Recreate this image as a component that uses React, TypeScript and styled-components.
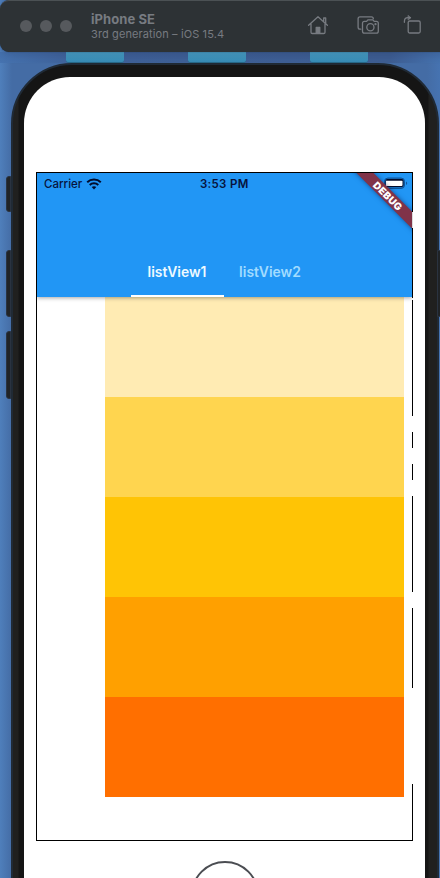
import React from "react";
import styled, { createGlobalStyle } from "styled-components";

const GlobalStyle = createGlobalStyle`
  * { box-sizing: border-box; }
  body { margin: 0; }
`;

const Desktop = styled.div`
  position: relative;
  width: 440px;
  height: 878px;
  overflow: hidden;
  display: flex;
  flex-direction: column;
  background: linear-gradient(90deg, #4f7fbb 0, #446ca5 12px, #446ca5 427px, #4673b1 440px);
  font-family: Inter, "Liberation Sans", sans-serif;
`;

const TitleBar = styled.header`
  position: relative;
  z-index: 1;
  flex: none;
  width: 460px;
  height: 52px;
  padding: 0 0 0 20px;
  display: flex;
  align-items: center;
  background: #2d3235;
  border-top: 1px solid #4b5154;
  border-radius: 9px;
  box-shadow: 0 0 1px #1c2a3c, 0 3px 10px rgba(20, 30, 60, 0.2);
`;

const Lights = styled.div`
  display: flex;
  gap: 8px;
  width: 71px;
  padding-bottom: 1px;
`;

const Light = styled.span`
  width: 12px;
  height: 12px;
  border-radius: 50%;
  background: #56595d;
`;

const Device = styled.div`
  width: 216px;
  color: #777b81;
`;

const DeviceName = styled.div`
  font-size: 13px;
  font-weight: 700;
  line-height: 15px;
  letter-spacing: 0.07px;
`;

const DeviceOs = styled.div`
  font-size: 11px;
  line-height: 14px;
  letter-spacing: 0.11px;
  white-space: nowrap;
`;

const Tools = styled.div`
  display: flex;
  padding-bottom: 3px;
  color: #777b81;
`;

const Tool = styled.span<{ $width: number }>`
  display: flex;
  width: ${(p) => p.$width}px;
`;

const Dock = styled.div`
  flex: none;
  height: 11px;
  padding-left: 66px;
  display: flex;
  gap: 64px;
  background: linear-gradient(90deg, #4673b0 0, #3f6199 80px, #3e5e93 390px, #4673b0 440px);
`;

const Folder = styled.span`
  flex: none;
  width: 58px;
  height: 11px;
  border-radius: 0 0 3px 3px;
  background: linear-gradient(#4aa2c8, #378cb6);
  border-bottom: 1px solid #286989;
`;

const Phone = styled.main`
  flex: none;
  width: 428px;
  height: 900px;
  margin: 0 0 0 11px;
  padding: 12px 10px 0 11px;
  border: 2px solid #202a35;
  border-radius: 61px;
  background: linear-gradient(90deg, #20201f 0, #20201f 5px, #151515 6px, #151515 415px, #20201f 416px);
`;

const Face = styled.div`
  width: 401px;
  height: 880px;
  padding: 95px 12px 0;
  display: flex;
  flex-direction: column;
  align-items: center;
  background: #fff;
  border-radius: 46px;
`;

const Display = styled.section`
  position: relative;
  flex: none;
  width: 377px;
  height: 669px;
  overflow: hidden;
  display: flex;
  flex-direction: column;
  border: solid #000;
  border-width: 1px 0 1px 1px;
`;

const AppBar = styled.div`
  flex: none;
  width: 375px;
  height: 124px;
  display: flex;
  flex-direction: column;
  justify-content: space-between;
  background: #2196f5;
  box-shadow: 0 1px 4px rgba(0, 0, 0, 0.35);
  position: relative;
`;

const StatusBar = styled.div`
  height: 21px;
  padding: 0 4px 0 7px;
  display: flex;
  align-items: center;
  font-size: 11.5px;
  font-weight: 500;
  color: #07133d;
`;

const Carrier = styled.div`
  width: 156px;
  display: flex;
  align-items: center;
  gap: 4px;
`;

const Clock = styled.div`
  flex: 1;
  font-weight: 600;
  letter-spacing: 0.3px;
`;

const Battery = styled.div`
  display: flex;
  justify-content: flex-end;
`;

const Tabs = styled.nav`
  display: flex;
  height: 48px;
  padding-left: 94px;
`;

const Tab = styled.div<{ $active?: boolean }>`
  width: 93px;
  height: 48px;
  padding: 14px 1px 0 0;
  text-align: center;
  font-size: 13.9px;
  line-height: 19px;
  font-weight: 600;
  color: ${(p) => (p.$active ? "#eefaff" : "#a2dcff")};
  border-bottom: 2px solid ${(p) => (p.$active ? "#fff" : "transparent")};
`;

const DebugCorner = styled.div`
  position: absolute;
  top: 0;
  right: 1px;
  width: 66px;
  height: 66px;
  overflow: hidden;
`;

const DebugRibbon = styled.div`
  position: absolute;
  top: 17px;
  left: -8px;
  width: 100px;
  height: 12px;
  transform: rotate(45deg);
  background: #803349;
  box-shadow: 0 0 5px rgba(0, 20, 70, 0.55);
  color: #fff;
  text-align: center;
  font-size: 10px;
  line-height: 12px;
  font-weight: 900;
  letter-spacing: 0.3px;
`;

const List = styled.div`
  width: 299.5px;
  margin-left: 67.5px;
  display: flex;
  flex-direction: column;
`;

const Swatch = styled.div<{ $color: string }>`
  height: 100px;
  background: ${(p) => p.$color};
`;

const EdgeLine = styled.svg`
  position: absolute;
  top: 0;
  right: 0;
`;

const HomeButton = styled.div`
  flex: none;
  width: 68px;
  height: 68px;
  margin-top: 20px;
  border: 2px solid #4b4d52;
  border-radius: 50%;
`;

const SideButton = styled.span<{ $top: number; $height: number; $right?: boolean }>`
  position: absolute;
  top: ${(p) => p.$top}px;
  ${(p) => (p.$right ? "right: -2px;" : "left: 6px;")}
  width: 5px;
  height: ${(p) => p.$height}px;
  background: #202326;
  border: 1px solid #2a3340;
  border-radius: ${(p) => (p.$right ? "0 3px 3px 0" : "3px 0 0 3px")};
`;

const HomeIcon = () => (
  <svg width="22" height="22" viewBox="0 0 22 22" fill="none" stroke="currentColor" strokeWidth="1.3" strokeLinejoin="round" strokeLinecap="round">
    <path d="M1.6 11.2 11 2.8l9.4 8.4M16.7 7.6V4h2v5.2M4 9.8v8.4c0 .9.5 1.3 1.3 1.3h11.4c.8 0 1.3-.4 1.3-1.3V9.8" />
    <path d="M9.2 19v-5.6h3.6V19z" fill="currentColor" />
  </svg>
);

const CameraIcon = () => (
  <svg width="24" height="22" viewBox="0 0 24 22" fill="none" stroke="currentColor" strokeWidth="1.3" strokeLinejoin="round" strokeLinecap="round">
    <path d="M4.8 15.2H4c-1.2 0-1.9-.7-1.9-1.9V4.7c0-1.2.7-1.9 1.9-1.9h11.4c1.2 0 1.9.7 1.9 1.9" />
    <path d="M8.4 7.4h2.2l1.3-1.6h5l1.3 1.6h2.2c1.2 0 1.9.7 1.9 1.9v8c0 1.2-.7 1.9-1.9 1.9h-12c-1.2 0-1.9-.7-1.9-1.9v-8c0-1.2.7-1.9 1.9-1.9Z" />
    <circle cx="14.4" cy="13.2" r="3.6" />
    <circle cx="19.5" cy="10.2" r=".5" fill="currentColor" />
  </svg>
);

const RotateIcon = () => (
  <svg width="20" height="22" viewBox="0 0 20 22" fill="none" stroke="currentColor" strokeWidth="1.3" strokeLinejoin="round" strokeLinecap="round">
    <rect x="5.2" y="7" width="12" height="12" rx="1.5" />
    <path d="M1.4 8.3V7.4c0-2.2 1.4-3.7 3.5-3.7h2.6" />
    <path d="M5.3 1.5 7.9 3.7 5.3 5.9z" fill="currentColor" strokeWidth=".6" />
  </svg>
);

const WifiIcon = () => (
  <svg width="16" height="12" viewBox="0 0 16 12" fill="none" stroke="#020c2b" strokeWidth="2">
    <path d="M1.2 4.3C5 .7 11 .7 14.8 4.3M3.7 6.9c2.4-2.2 6.2-2.2 8.6 0" />
    <path d="m5.7 9 2.3 2.4L10.3 9C9 7.9 7 7.9 5.7 9Z" fill="#020c2b" stroke="none" />
  </svg>
);

const BatteryIcon = () => (
  <svg width="25" height="13" viewBox="0 0 25 13">
    <rect x="1.5" y="1" width="20" height="10.5" rx="3.5" fill="#176ebb" stroke="#0e559c" />
    <rect x="2.5" y="2" width="18" height="8" rx="2" fill="#020c2b" />
    <path d="M3 3.5H18.5a1 1 0 0 1 1 1v3.5a1 1 0 0 1-1 1H3z" fill="#fff" />
    <path d="M3.5 3.5H19" stroke="#020c2b" strokeDasharray="1 1" />
    <path d="M23 4.5c1.6.7 1.6 2.8 0 3.5z" fill="#0e559c" />
  </svg>
);

const colors = ["#ffebb3", "#ffd54f", "#ffc405", "#ffa000", "#ff6f00"];

export default function App() {
  return (
    <Desktop>
      <GlobalStyle />
      <TitleBar>
        <Lights>
          <Light />
          <Light />
          <Light />
        </Lights>
        <Device>
          <DeviceName>iPhone SE</DeviceName>
          <DeviceOs>3rd generation – iOS 15.4</DeviceOs>
        </Device>
        <Tools>
          <Tool $width={49}>
            <HomeIcon />
          </Tool>
          <Tool $width={47}>
            <CameraIcon />
          </Tool>
          <Tool $width={20}>
            <RotateIcon />
          </Tool>
        </Tools>
      </TitleBar>
      <Dock>
        <Folder />
        <Folder />
        <Folder />
      </Dock>
      <SideButton $top={176} $height={36} />
      <SideButton $top={250} $height={67} />
      <SideButton $top={331} $height={68} />
      <SideButton $top={250} $height={67} $right />
      <Phone>
        <Face>
          <Display>
            <AppBar>
              <StatusBar>
                <Carrier>
                  Carrier
                  <WifiIcon />
                </Carrier>
                <Clock>3:53 PM</Clock>
                <Battery>
                  <BatteryIcon />
                </Battery>
              </StatusBar>
              <Tabs>
                <Tab $active>listView1</Tab>
                <Tab>listView2</Tab>
              </Tabs>
            </AppBar>
            <List>
              {colors.map((color) => (
                <Swatch key={color} $color={color} />
              ))}
            </List>
            <DebugCorner>
              <DebugRibbon>DEBUG</DebugRibbon>
            </DebugCorner>
            <EdgeLine width="1" height="667" viewBox="0 0 1 667">
              <path
                d="M.5 0v39M.5 55v70M.5 127v116M.5 259v16M.5 291v16M.5 323v96M.5 435v80M.5 611v56"
                stroke="#000"
              />
            </EdgeLine>
          </Display>
          <HomeButton />
        </Face>
      </Phone>
    </Desktop>
  );
}
